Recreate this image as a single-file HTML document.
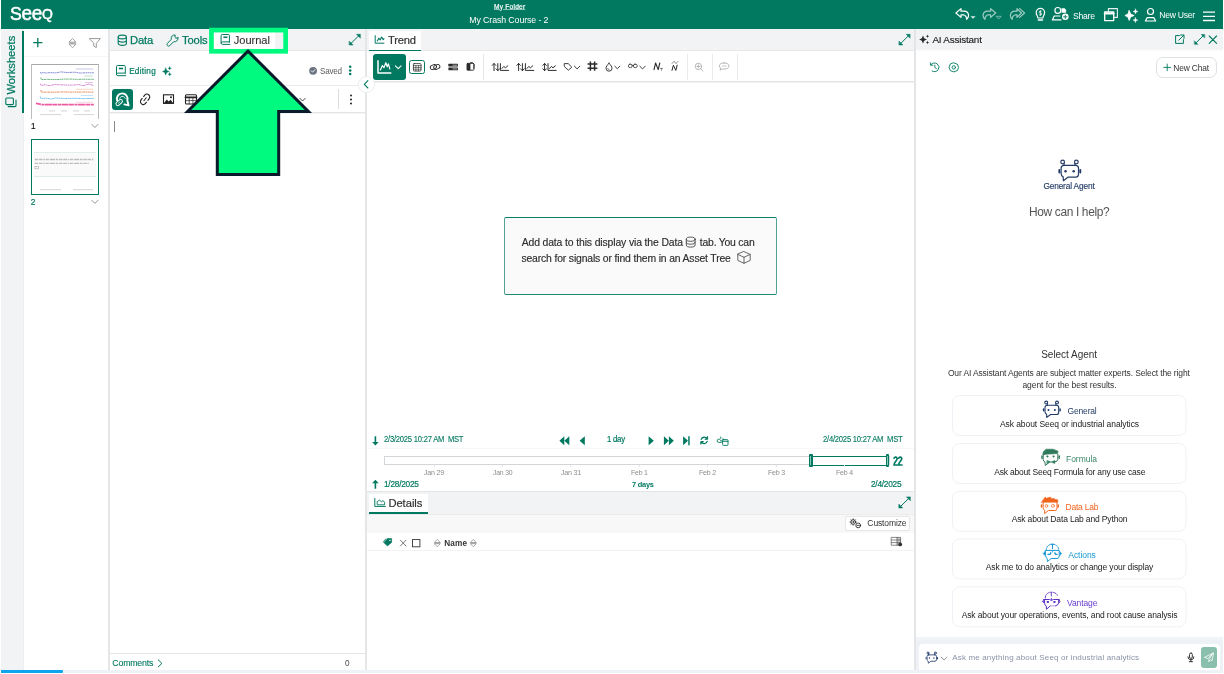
<!DOCTYPE html>
<html lang="en">
<head>
<meta charset="utf-8">
<title>Seeq - My Crash Course - 2</title>
<style>
*{box-sizing:border-box;margin:0;padding:0}
html,body{width:1224px;height:674px;overflow:hidden;background:#fff}
#app{position:absolute;left:0;top:0;width:1224px;height:674px;will-change:transform}
body{font-family:"Liberation Sans",sans-serif;font-size:11px;color:#333;position:relative}
.a{position:absolute}
.t{position:absolute;white-space:nowrap;line-height:1;transform-origin:0 50%;color:#333}
svg{position:absolute;overflow:visible}
.bar{background:#f1f3f4}
.sep{background:#e4e6e8}
.vs{width:1px;height:26px;top:54px;background:#e6e6e6}
.card{position:absolute;left:952px;width:234.5px;height:40.8px;border:1px solid #f1f4f7;border-radius:7px;background:#fff}
.i{fill:none;stroke:currentColor;stroke-linecap:round;stroke-linejoin:round}
</style>
</head>
<body>
<div id="app">
<!-- ===== top header ===== -->
<div class="a" style="left:1px;top:0;width:1222px;height:29px;background:#007960"></div>
<div class="t" style="left:10.4px;top:3.2px;font-size:19px;line-height:20px;color:#fff;-webkit-text-stroke:.55px #fff;letter-spacing:-.35px;transform:scaleX(.93)">S<span style="font-size:20.4px">ee</span><span style="font-size:21px;font-variant:small-caps;position:relative;top:-.9px;letter-spacing:0">q</span></div>
<div class="t" style="left:494.059px;top:3.81px;font-size:6.6px;letter-spacing:0.217px;color:#fff;text-decoration:underline;text-decoration-color:rgba(255,255,255,.55);text-underline-offset:.4px;-webkit-text-stroke:.2px">My Folder</div>
<div class="t" style="left:469.278px;top:15.913px;font-size:8.8px;letter-spacing:-0.11px;color:#fff">My Crash Course - 2</div>
<div class="t" style="left:1073.408px;top:12.004px;font-size:8.8px;letter-spacing:-0.264px;transform:scaleX(0.98);color:#fff">Share</div>
<div class="t" style="left:1159.296px;top:10.804px;font-size:8.6px;letter-spacing:-0.258px;color:#fff">New User</div>
<svg class="i" style="left:0;top:0;color:#fff" width="1224" height="29" stroke-width="1.2">
  <!-- undo -->
  <path d="M961 8.6 L955.9 13 L961 17.4 V14.8 H963.4 A4.6 4.6 0 0 1 966.6 19.3 A5.6 5.6 0 0 0 968.6 15.4 A4.6 4.6 0 0 0 964 11.2 H961 Z"/>
  <path d="M970.4 16.3 h5.2 l-2.6 2.5 z" fill="#fff" stroke="none" opacity=".85"/>
  <!-- redo (disabled) -->
  <g opacity=".62"><path d="M990.6 8.6 L995.7 13 L990.6 17.4 V14.8 H988.2 A4.6 4.6 0 0 0 985 19.3 A5.6 5.6 0 0 1 983 15.4 A4.6 4.6 0 0 1 987.6 11.2 H990.6 Z"/>
  <path d="M996.6 16.3 h4.6 l-2.3 2.5 z" stroke-width=".7"/></g>
  <!-- redo all (disabled) -->
  <g opacity=".62"><path d="M1017 8.6 L1021.4 13 L1017 17.4 V14.8 H1015.4 A4.6 4.6 0 0 0 1012.2 19.3 A5.6 5.6 0 0 1 1010.4 15.4 A4.6 4.6 0 0 1 1015 11.2 H1017 Z"/>
  <path d="M1019.6 8.6 L1024.6 13 L1019.6 17.4"/></g>
  <!-- light bulb -->
  <path d="M1037.9 18 C1037.9 16.2 1036.2 15.2 1036.2 12.6 A4.2 4.2 0 0 1 1044.6 12.6 C1044.6 15.2 1042.9 16.2 1042.9 18 Z"/>
  <path d="M1038.3 20.1 h4.2" stroke-width="1.5"/>
  <path d="M1041.3 11.3 h-1.3 a.9 .9 0 0 0 0 1.8 h.8 a.9 .9 0 0 1 0 1.8 h-1.4 M1040.4 10.5 v5.2" stroke-width=".7"/>
  <!-- share user -->
  <circle cx="1057.8" cy="10.4" r="2.9"/>
  <path d="M1061 19.9 H1052.4 L1054.2 16 H1060"/>
  <path d="M1062 8.6 h2.6 l1.2 1.2 v2.6 h-3.8 z" fill="#fff" stroke-width=".6"/>
  <circle cx="1065.3" cy="16.8" r="3.3" fill="#fff" stroke="none"/>
  <path d="M1063.6 16.8 h3.4 M1065.3 15.1 v3.4" stroke="#007960" stroke-width=".9"/>
  <!-- copy windows -->
  <path d="M1108.4 11.2 V8.6 H1117.4 V17.4 H1114.6" stroke-width="1.1" opacity=".9"/>
  <rect x="1104.7" y="12" width="9" height="8.6" stroke-width="1.3"/>
  <path d="M1104.7 13.4 h9" stroke-width="2"/>
  <!-- sparkles -->
  <path d="M1129.2 10.6 L1130.7 14.1 L1134.2 15.5 L1130.7 16.9 L1129.2 20.4 L1127.8 16.9 L1124.9 15.5 L1127.8 14.1 Z" fill="#fff" stroke-width=".8"/>
  <path d="M1135.5 9 L1136.2 10.8 L1138 11.5 L1136.2 12.2 L1135.5 14 L1134.8 12.2 L1133 11.5 L1134.8 10.8 Z" fill="#fff" stroke-width=".4"/>
  <path d="M1135.4 17.6 L1136.1 19.4 L1137.9 20.1 L1136.1 20.8 L1135.4 22.6 L1134.7 20.8 L1132.9 20.1 L1134.7 19.4 Z" fill="#fff" stroke-width=".4"/>
  <!-- user -->
  <circle cx="1150.5" cy="11.5" r="3"/>
  <path d="M1147.2 17.6 H1153.8 L1155.6 21 H1145.4 Z"/>
  <!-- menu -->
  <path d="M1203 12.1 h12 M1203 16.3 h12 M1203 20.5 h12" stroke-width="1.3" stroke-linecap="butt"/>
</svg>
<!-- ===== worksheets rail + panel ===== -->
<div class="a bar" style="left:1px;top:29px;width:23px;height:641px;border-right:1px solid #eceef0"></div>
<div class="a" style="left:22px;top:31px;width:2px;height:81.5px;background:#007960"></div>
<div class="t" style="left:0;top:0;font-size:11.2px;color:#007960;-webkit-text-stroke:.25px;transform-origin:0 0;transform:translate(15.5px,94.6px) rotate(-90deg) translateY(-9.3px)">Worksheets</div>
<div class="a" style="left:24px;top:56px;width:84px;height:1px;background:#f6f6f6"></div>
<svg class="i" style="left:0;top:29px;color:#007960" width="110" height="190" viewBox="0 29 110 190" stroke-width="1.2">
  <!-- worksheets icon -->
  <path d="M16 100 V105.6 Q16 106.6 15 106.6 H8.2" stroke-width="1.1"/><rect x="5.8" y="98" width="7.6" height="6.6" rx="1" stroke-width="1.1"/>
  <!-- plus -->
  <path d="M33.2 42.7 h9.2 M37.8 38.1 v9.2" stroke-width="1.3" stroke-linecap="butt"/>
  <!-- sort -->
  <g stroke="#9a9a9a" stroke-width=".9"><path d="M69.2 41.9 L72.5 38.5 L75.8 41.9 Z M69.2 44.3 L72.5 47.7 L75.8 44.3 Z"/><path d="M69.6 43.1 h5.8" stroke-width="1"/></g>
  <!-- filter -->
  <path d="M89.6 38.6 H100.4 L96.3 43.4 V47.6 L93.7 46 V43.4 Z" stroke="#9a9a9a" stroke-width="1"/>
  <!-- chevrons -->
  <path d="M91.8 124.4 L94.9 127.5 L98 124.4 M91.8 200.3 L94.9 203.4 L98 200.3" stroke="#8a8a8a" stroke-width=".9"/>
</svg>
<!-- thumbnail 1 -->
<div class="a" style="left:31px;top:64px;width:68px;height:55px;border:1px solid #bdbdbd;border-bottom:0;border-top-color:#a9a9a9;background:#fff"></div>
<svg style="left:31px;top:64px" width="68" height="55" viewBox="31 64 68 55" fill="none">
  <g stroke-width=".9" stroke-dasharray="2.2 .5 1.3 .4">
    <path d="M40.4 72 l.6 1.400 l2 -.9 l3 .5 l4 -.4 l6 .3 l5 -1 l6 .6 l8 -.3 l5 .9 l4 -.3 l9.800 0" stroke="#5a63c4" opacity=".8"/>
    <path d="M40.8 77.600 l.6 2 l5 -.2 l7 .1 h6 l4 -.4 h8 l6 .3 l8 -.2 l8.400 .1" stroke="#3f9c5c" opacity=".85"/>
    <path d="M40.4 83.600 l.6 1.800 l4 -.6 l5 .8 l5 -1.100 l8 .4 l7 .3 l9 -.6 l4 1.100 l6 -1.700 l4.600 1.600" stroke="#c458c8" opacity=".8"/>
    <path d="M40.800 90 l.6 2.200 l5 -.1 l8 .1 l7 -.3 l9 .2 l8 -.1 l15 .1" stroke="#e0753a" opacity=".9"/>
    <path d="M40.400 96.600 l.6 2 l5 -.4 l6 .9 l3 -1.100 l9 .5 l10 -.2 l9 .3 l10.600 -.2" stroke="#4aaeea" opacity=".85"/>
  </g>
  <path d="M36 103.400 l4 .8 l2 .500 h51.800" stroke="#ea3f90" stroke-width="1.700" stroke-dasharray="5 .6 3 .5 7 .4" opacity=".85"/>
  <g fill="#9aa0c8" opacity=".55"><rect x="76" y="68.600" width="17" height=".8" fill="#7a82c8"/><rect x="84" y="75.600" width="9" height=".8" fill="#7ab88a"/><rect x="85" y="82" width="8" height=".8" fill="#c880c8"/><rect x="76" y="88.800" width="17" height=".8" fill="#e8a078"/><rect x="81" y="95.200" width="12" height=".8" fill="#80c0ea"/><rect x="76" y="101.800" width="17" height=".7" fill="#ea90b8"/></g>
  <g fill="#d2d2d2"><rect x="49" y="110.400" width="6" height="1"/><rect x="61" y="110.400" width="6" height="1"/><rect x="73" y="110.400" width="6" height="1"/><rect x="84" y="110.400" width="6" height="1"/><rect x="40" y="114.200" width="21" height=".9"/><rect x="74" y="114.200" width="20" height=".9"/></g>
</svg>
<div class="t" style="left:30.879px;top:121.802px;font-size:8.4px;transform:scaleX(0.97);color:#111;-webkit-text-stroke:.2px">1</div>
<!-- thumbnail 2 (active) -->
<div class="a" style="left:31px;top:139px;width:68px;height:56px;border:1px solid #007960;border-bottom-width:1.5px;background:#fff"></div>
<div class="a" style="left:34.4px;top:152px;width:61.4px;height:24.6px;background:#fafafa;border-top:1px solid #dfeeea;border-bottom:1px solid #dfeeea"></div>
<svg style="left:31px;top:139px" width="68" height="56" viewBox="31 139 68 56" fill="#b9b9b9">
  <path d="M34.800 159.500 h59 M34.800 163.400 h54" fill="none" stroke="#a9a9a9" stroke-width="1.300" stroke-dasharray="3.4 .8 3.6 .8 1.6 .8 3 .8 5.4 .8 2.4 .8" opacity=".75"/><rect x="35" y="166.600" width="3.600" height="2.200" fill="none" stroke="#aaa" stroke-width=".6"/>
  <rect x="40" y="189.300" width="21" height=".9" fill="#cfcfcf"/><rect x="73" y="189.300" width="20" height=".9" fill="#cfcfcf"/>
</svg>
<div class="t" style="left:30.779px;top:197.802px;font-size:8.4px;color:#007960;-webkit-text-stroke:.2px">2</div>
<!-- ===== journal panel ===== -->
<div class="a sep" style="left:108px;top:29px;width:2px;height:641px"></div>
<div class="a bar" style="left:110px;top:29px;width:255px;height:21px"></div>
<div class="a" style="left:110px;top:50px;width:255px;height:1px;background:#e6e8ea"></div>
<div class="a" style="left:213px;top:31px;width:62px;height:19px;background:#fff"></div>
<div class="t" style="left:130.081px;top:35.2px;font-size:11.2px;letter-spacing:-0.171px;color:#007960;-webkit-text-stroke:.25px">Data</div>
<div class="t" style="left:181.948px;top:35.2px;font-size:11.2px;letter-spacing:-0.115px;color:#007960;-webkit-text-stroke:.25px">Tools</div>
<div class="t" style="left:233.827px;top:35.01px;font-size:11.1px;letter-spacing:-0.045px;-webkit-text-stroke:.12px">Journal</div>
<div class="t" style="left:129.127px;top:68.012px;font-size:8.2px;letter-spacing:0.261px;color:#007960;-webkit-text-stroke:.2px">Editing</div>
<div class="t" style="left:320.429px;top:67.211px;font-size:8.4px;letter-spacing:-0.252px;transform:scaleX(0.972);color:#5c5c5c">Saved</div>
<div class="a" style="left:110px;top:85px;width:255px;height:1px;background:#e9ebec"></div>
<div class="a" style="left:112px;top:89px;width:20.5px;height:20.5px;border-radius:3px;background:#007960"></div>
<div class="a" style="left:338px;top:89px;width:1px;height:20px;background:#dcdcdc"></div>
<div class="a" style="left:110px;top:112px;width:255px;height:1px;background:#e2e4e6"></div>
<div class="a" style="left:110px;top:113px;width:255px;height:1px;background:#f3f4f5"></div>
<div class="a" style="left:114.2px;top:121px;width:1.2px;height:11.4px;background:#8a8a8a"></div>
<div class="a" style="left:110px;top:653px;width:255px;height:1px;background:#e4e6e7"></div>
<div class="t" style="left:112.353px;top:658.807px;font-size:8.8px;letter-spacing:-0.223px;color:#007960;-webkit-text-stroke:.1px">Comments</div>
<div class="t" style="left:344.881px;top:658.911px;font-size:8.6px;transform:scaleX(0.949);color:#4a4a4a">0</div>
<svg class="i" style="left:110px;top:29px;color:#007960" width="258" height="641" viewBox="110 29 258 641" stroke-width="1.1">
  <!-- data (db) -->
  <ellipse cx="122.3" cy="37" rx="4.1" ry="1.9"/><path d="M118.200 37 V43.500 A4.100 1.900 0 0 0 126.400 43.500 V37 M118.200 40.200 A4.100 1.900 0 0 0 126.400 40.200"/>
  <!-- tools (wrench) -->
  <path d="M177.950 37.800 L175.800 38.200 L174.900 37.300 L175.200 35.050 A3.400 3.400 0 0 0 171.300 39.300 L167.300 43.500 A1.650 1.650 0 0 0 169.600 45.800 L173.700 41.700 A3.400 3.400 0 0 0 177.950 37.800 Z" stroke-width="1"/>
  <!-- journal (book) -->
  <path d="M229.400 42.200 V35.600 Q229.400 34.500 228.300 34.500 H222.200 Q221.100 34.500 221.100 35.600 V43 Q221.100 44.400 222.500 44.400 H229.800 M221.100 43 Q221.100 41.900 222.500 41.900 H229.400" stroke-width="1"/><path d="M223.400 37.200 h4" stroke-width="1.500" stroke-linecap="butt"/>
  <!-- expand -->
  <g stroke="#007960" fill="#007960" stroke-width="1"><path d="M351 43.4 L358.6 35.9"/><path d="M360.2 34.3 H356.5 L360.2 38 Z M349.4 45 H353.1 L349.4 41.3 Z" stroke-width=".5"/></g>
  <!-- editing (book) -->
  <path d="M125.300 73.200 V66.600 Q125.300 65.500 124.200 65.500 H117.600 Q116.500 65.500 116.500 66.600 V74.400 Q116.500 75.700 117.900 75.700 H125.700 M116.500 74.400 Q116.500 73.100 117.900 73.100 H125.300" stroke-width="1"/><path d="M118.900 68.500 h4.200" stroke-width="1.600" stroke-linecap="butt"/>
  <!-- sparkles -->
  <g fill="#007960" stroke-width=".3"><path d="M165.700 67.800 L166.800 70.400 L169.400 71.500 L166.800 72.600 L165.700 75.200 L164.600 72.600 L162.400 71.500 L164.600 70.400 Z"/><path d="M169.700 66.600 L170.200 67.800 L171.400 68.300 L170.200 68.800 L169.700 70 L169.200 68.800 L168 68.300 L169.200 67.800 Z M169.700 72.600 L170.200 73.800 L171.400 74.300 L170.200 74.800 L169.700 76 L169.200 74.800 L168 74.300 L169.200 73.800 Z"/></g>
  <!-- saved check -->
  <circle cx="313.100" cy="70.800" r="3.900" fill="#6b7280" stroke="none"/><path d="M311.300 70.900 L312.600 72.200 L315 69.600" stroke="#fff" stroke-width=".9"/>
  <!-- kebab -->
  <g fill="#007960" stroke="none"><circle cx="350.200" cy="66.800" r="1.250"/><circle cx="350.200" cy="70.400" r="1.250"/><circle cx="350.200" cy="74" r="1.250"/></g>
  <g fill="#222" stroke="none"><circle cx="351" cy="95.400" r="1"/><circle cx="351" cy="99.400" r="1"/><circle cx="351" cy="103.400" r="1"/></g>
  <!-- seeq link button glyph -->
  <g stroke="#fff"><path d="M117.200 100.400 A5.300 5.300 0 1 1 127.300 100.200 L128.600 105.400 L124.400 104.400" stroke-width="1.900"/><path d="M119.700 98.200 A3 3 0 0 1 125.300 98.600" stroke-width=".8" stroke-dasharray=".7 .5"/><rect x="-3.700" y="-1.800" width="7.400" height="3.600" rx="1.800" transform="translate(119.200 102.500) rotate(-42)" fill="#007960" stroke-width="1"/><path d="M118.300 103.300 L120.100 101.700" stroke-width=".7"/></g>
  <!-- link -->
  <g stroke="#222" stroke-width="1.100" transform="translate(145.100 99.300) rotate(-52)"><rect x="-5.800" y="-2.800" width="11.600" height="5.600" rx="2.800" stroke-dasharray="2.200 1.600 13.200 1.600 11" stroke-linecap="butt"/><path d="M-1.900 0 H1.900" stroke-width="1"/></g>
  <!-- image -->
  <rect x="163.500" y="94.800" width="10" height="8.600" stroke="#222" stroke-width="1.100" stroke-linejoin="miter"/><path d="M164 103 L166.800 99.600 L168.600 101.400 L170.600 99.800 L173 103 Z" fill="#222" stroke="none"/><circle cx="171" cy="97.300" r="1" fill="#222" stroke="none"/>
  <!-- table -->
  <g stroke="#222"><rect x="185.500" y="94.800" width="11" height="9.200" rx="1" stroke-width="1.100"/><path d="M185.500 97.400 h11" stroke-width="1.600"/><path d="M185.500 100.600 h11 M189.200 97.400 v6.600 M192.900 97.400 v6.600" stroke-width=".7"/></g>
  <!-- chevrons -->
  <path d="M299.800 98.300 L302.500 101 L305.200 98.300" stroke="#333" stroke-width=".9"/>
  <path d="M158.200 659.800 L161.900 663.400 L158.200 667" stroke-width="1"/>
</svg>
<!-- ===== trend panel ===== -->
<div class="a sep" style="left:365px;top:29px;width:2px;height:641px"></div>
<div class="a bar" style="left:367px;top:29px;width:547px;height:21px"></div>
<div class="a" style="left:367px;top:50px;width:547px;height:1px;background:#e6e8ea"></div>
<div class="a" style="left:369px;top:31px;width:52px;height:19.5px;background:#fff;border-bottom:1.5px solid #007960"></div>
<div class="t" style="left:387.948px;top:35.11px;font-size:11.2px;letter-spacing:-0.209px;-webkit-text-stroke:.2px">Trend</div>
<div class="a" style="left:373.3px;top:54px;width:32.700px;height:25.600px;border-radius:3px;background:#007960"></div>
<div class="a" style="left:409px;top:60px;width:16px;height:14px;border-radius:2.500px;border:1px solid #007960"></div>
<div class="a vs" style="left:483px"></div><div class="a vs" style="left:687px;opacity:.8"></div><div class="a vs" style="left:712px;opacity:.8"></div><div class="a vs" style="left:737px;opacity:.8"></div>
<div class="a" style="left:367px;top:81px;width:547px;height:1px;background:#e2e4e6"></div>
<div class="a" style="left:367px;top:82px;width:547px;height:1px;background:#f0f1f2"></div>
<!-- collapse handle -->
<div class="a" style="left:358px;top:76px;width:16.500px;height:16.500px;border-radius:50%;background:#fff;border:1px solid #ececec"></div>
<!-- empty state -->
<div class="a" style="left:504px;top:217px;width:273px;height:78px;border:1px solid #4fa391;border-top-color:#0a7e66;border-bottom-color:#1f8b74;border-radius:2px;background:#fafafa"></div>
<div class="t" style="left:521.68px;top:238.206px;font-size:10.4px;letter-spacing:-0.124px;color:#2c2c2c;-webkit-text-stroke:.15px">Add data to this display via the Data</div>
<div class="t" style="left:699.843px;top:238.206px;font-size:10.4px;letter-spacing:-0.214px;color:#2c2c2c;-webkit-text-stroke:.15px">tab. You can</div>
<div class="t" style="left:521.411px;top:253.706px;font-size:10.4px;letter-spacing:-0.151px;color:#2c2c2c;-webkit-text-stroke:.15px">search for signals or find them in an Asset Tree</div>
<!-- time range -->
<div class="t" style="left:383.916px;top:435.411px;font-size:8.6px;letter-spacing:-0.258px;transform:scaleX(0.887);color:#007960;-webkit-text-stroke:.12px">2/3/2025 10:27 AM &nbsp;MST</div>
<div class="t" style="left:607.107px;top:435.308px;font-size:8.3px;letter-spacing:-0.249px;transform:scaleX(0.938);color:#007960;-webkit-text-stroke:.2px">1 day</div>
<div class="t" style="left:823.315px;top:435.411px;font-size:8.6px;letter-spacing:-0.258px;transform:scaleX(0.889);color:#007960;-webkit-text-stroke:.12px">2/4/2025 10:27 AM &nbsp;MST</div>
<div class="a" style="left:367px;top:448px;width:547px;height:1px;background:#f7f7f7"></div>
<div class="a" style="left:384px;top:456px;width:506px;height:9px;border:1px solid #d3d6d9;background:#fff"></div>
<div class="a" style="left:811px;top:455.500px;width:76px;height:10px;border-top:1.300px solid #007960;border-bottom:1.300px solid #007960;background:#fff"></div>
<div class="a" style="left:809px;top:454px;width:3.600px;height:12.500px;background:#007960;border-radius:1px"></div><div class="a" style="left:810.400px;top:456px;width:.8px;height:8.500px;background:#8cc7b8"></div>
<div class="a" style="left:885.600px;top:454px;width:3.600px;height:12.500px;background:#007960;border-radius:1px"></div><div class="a" style="left:887px;top:456px;width:.8px;height:8.500px;background:#8cc7b8"></div>
<div class="a" style="left:433.5px;top:465px;width:1px;height:2px;background:#dfe6ee"></div><div class="a" style="left:501.9px;top:465px;width:1px;height:2px;background:#dfe6ee"></div><div class="a" style="left:570.4px;top:465px;width:1px;height:2px;background:#dfe6ee"></div><div class="a" style="left:638.8px;top:465px;width:1px;height:2px;background:#dfe6ee"></div><div class="a" style="left:707.3px;top:465px;width:1px;height:2px;background:#dfe6ee"></div><div class="a" style="left:775.7px;top:465px;width:1px;height:2px;background:#dfe6ee"></div><div class="a" style="left:844.2px;top:465px;width:1px;height:2px;background:#dfe6ee"></div>
<div class="t" style="left:424.19px;top:469.002px;font-size:7.4px;letter-spacing:-0.222px;transform:scaleX(0.956);color:#8c8c8c">Jan 29</div>
<div class="t" style="left:492.892px;top:469.002px;font-size:7.4px;letter-spacing:-0.222px;transform:scaleX(0.933);color:#8c8c8c">Jan 30</div>
<div class="t" style="left:561.189px;top:469.002px;font-size:7.4px;letter-spacing:-0.222px;transform:scaleX(0.956);color:#8c8c8c">Jan 31</div>
<div class="t" style="left:631.13px;top:469.002px;font-size:7.4px;letter-spacing:-0.222px;transform:scaleX(0.939);color:#8c8c8c">Feb 1</div>
<div class="t" style="left:699.419px;top:469.002px;font-size:7.4px;letter-spacing:-0.222px;transform:scaleX(0.957);color:#8c8c8c">Feb 2</div>
<div class="t" style="left:768.121px;top:469.002px;font-size:7.4px;letter-spacing:-0.222px;transform:scaleX(0.954);color:#8c8c8c">Feb 3</div>
<div class="t" style="left:836.424px;top:469.002px;font-size:7.4px;letter-spacing:-0.222px;transform:scaleX(0.948);color:#8c8c8c">Feb 4</div>
<div class="t" style="left:383.667px;top:480.408px;font-size:8.4px;letter-spacing:-0.252px;transform:scaleX(0.99);color:#007960;-webkit-text-stroke:.2px">1/28/2025</div>
<div class="t" style="left:631.882px;top:481.303px;font-size:7.9px;letter-spacing:-0.237px;transform:scaleX(0.938);color:#007960;font-weight:bold">7 days</div>
<div class="t" style="left:871.281px;top:480.408px;font-size:8.4px;letter-spacing:-0.252px;transform:scaleX(0.991);color:#007960;-webkit-text-stroke:.2px">2/4/2025</div>
<!-- ===== details panel ===== -->
<div class="a" style="left:367px;top:491px;width:547px;height:1px;background:#e3e5e7"></div>
<div class="a bar" style="left:367px;top:492px;width:547px;height:21.500px"></div>
<div class="a" style="left:369px;top:494px;width:59px;height:20px;background:#fff;border-bottom:2px solid #007960"></div>
<div class="t" style="left:388.381px;top:498.004px;font-size:11.2px;letter-spacing:-0.029px;-webkit-text-stroke:.2px">Details</div>
<div class="a" style="left:367px;top:514px;width:547px;height:18.700px;background:#f8f8f8;border-top:1px solid #ebebeb"></div>
<div class="a" style="left:845px;top:516px;width:65px;height:14.500px;background:#fff;border:1px solid #e6e6e6;border-radius:2px"></div>
<div class="t" style="left:867.368px;top:519.311px;font-size:8.5px;letter-spacing:-0.118px">Customize</div>
<div class="t" style="left:444.251px;top:540.209px;font-size:8.2px;letter-spacing:0.176px;font-weight:bold">Name</div>
<div class="a" style="left:367px;top:550px;width:547px;height:1px;background:#f3f3f3"></div>
<svg class="i" style="left:365px;top:29px;color:#2b2b2b" width="550" height="530" viewBox="365 29 550 530" stroke-width="1">
  <!-- trend tab icon -->
  <g stroke="#007960"><path d="M375.200 35.600 V43.200 H384"/><path d="M377.300 41 L378.800 38.200 L380.200 40 L381.600 37 L383.200 39.600 L384 38.600" stroke-width="1.100"/></g>
  <!-- expand (trend) -->
  <g stroke="#007960" fill="#007960" stroke-width="1"><path d="M900.8 43.4 L908.3 35.9"/><path d="M909.9 34.3 H906.2 L909.9 38 Z M899.2 45 H902.9 L899.2 41.3 Z" stroke-width=".5"/></g>
  <!-- collapse chevron -->
  <path d="M367.900 80.600 L364.300 84.300 L367.900 88" stroke="#007960" stroke-width="1.100"/>
  <!-- chart button -->
  <g stroke="#fff"><path d="M378 60.800 V73 H390.800" stroke-width="1.500"/><path d="M380.400 70 L382.400 65.600 L384 67.600 L385.800 62.600 L387.200 66.800 L388.400 63.800 L389.800 68.800" stroke-width="1.200"/><path d="M395.400 65.800 L398.200 68.600 L401 65.800" stroke-width="1.100"/></g>
  <!-- calendar -->
  <g stroke-width=".8"><rect x="413.400" y="63.600" width="7.600" height="7.400" rx=".8"/><path d="M413.400 65.600 h7.600 M415.900 65.600 v5.400 M418.400 65.600 v5.400 M413.400 67.400 h7.600 M413.400 69.200 h7.600" stroke-width=".6"/></g>
  <!-- link -->
  <g stroke-width=".9"><rect x="430.200" y="65" width="6.400" height="4" rx="2" transform="rotate(-25 433.400 67)"/><rect x="433.600" y="65" width="6.400" height="4" rx="2" transform="rotate(-25 436.800 67)"/></g>
  <!-- rows -->
  <g fill="#2b2b2b" stroke="none"><rect x="448.400" y="63.800" width="9.600" height="2.800" rx=".5"/><rect x="448.400" y="67.500" width="9.600" height="2.800" rx=".5"/></g><path d="M453 65.200 h4 M453 68.900 h4" stroke="#fff" stroke-width=".6"/>
  <!-- contrast -->
  <rect x="467" y="63.400" width="6.800" height="6.800" rx=".6" stroke-width=".9"/><path d="M467 63.400 h3.400 v6.800 h-3.400 z" fill="#2b2b2b" stroke="none"/><path d="M470.400 62.600 h2.200 l1.600 1.600 v4" stroke-width=".8"/>
  <!-- axis group icons -->
  <g stroke-width=".95" stroke="#222">
    <path d="M494 70.600 V63.600 M492.200 65.400 L494 63.500 L495.800 65.400 M497.800 63.600 V70.600 M496 68.800 L497.800 70.700 L499.600 68.800 M500.400 63.600 V70.400 H508.600 M502 68.400 L503.800 66.400 L505.400 67.800 L507.800 65.800"/>
    <path d="M518.600 70.600 V63.600 M516.800 65.400 L518.600 63.500 L520.400 65.400 M522.400 63.600 V70.600 M520.600 68.800 L522.400 70.700 L524.200 68.800 M525.400 63.600 V70.400 H533.800 M527 68.400 L528.800 66.400 L530.400 67.800 L532.800 65.800"/>
    <path d="M544.600 63.600 V70.600 M542.800 65.400 L544.600 63.500 L546.400 65.400 M542.800 68.800 L544.600 70.700 L546.400 68.800 M548 63.600 V70.400 H556.200 M549.600 68.400 L551.400 66.400 L553 67.800 L555.400 65.800"/>
  </g>
  <!-- tag -->
  <path d="M564.600 63.600 H568.200 L571.800 67.200 L568.400 70.200 L564.600 66.800 Z" stroke-width=".9"/><path d="M574.400 66.200 L577.100 68.900 L579.800 66.200" stroke-width=".9"/>
  <!-- grid -->
  <path d="M587.600 64 h9.800 M587.600 68.200 h9.800 M590.400 61.400 v9.400 M594.600 61.400 v9.400" stroke-width="1.500" stroke-linecap="butt"/>
  <!-- drop -->
  <path d="M609 63.200 C610.800 65.400 612 66.600 612 68.200 A3 3 0 0 1 606 68.200 C606 66.600 607.200 65.400 609 63.200 Z" stroke-width=".9"/><path d="M607.600 68.400 A1.500 1.500 0 0 0 609 69.600" stroke-width=".6"/><path d="M614.800 66.200 L617.300 68.700 L619.800 66.200" stroke-width=".9"/>
  <!-- glasses -->
  <g stroke-width=".8"><rect x="628.400" y="64.200" width="3.800" height="3.400" rx="1.600"/><rect x="633.400" y="64.200" width="3.800" height="3.400" rx="1.600"/><path d="M632.200 65.400 h1.200"/></g><path d="M639.800 66.200 L642.500 68.900 L645.200 66.200" stroke-width=".9"/>
  <!-- N -->
  <path d="M654 69.600 L655.600 63 L658.200 69.600 L659.800 63" stroke-width="1.100"/><path d="M660.200 68.400 h2.400 M661.400 68.400 v2" stroke-width=".5"/>
  <!-- dashed N -->
  <path d="M672 70.400 L673.400 65.200 L675.800 70.400 L677.200 65.200" stroke-width="1"/><path d="M672 63.600 L674 61.200 L676 63.600 L678 61.200" stroke-width=".5" stroke-dasharray=".9 .7"/>
  <!-- zoom (disabled) -->
  <g stroke="#a6a6a6" stroke-width=".8"><circle cx="698.400" cy="66.400" r="3.200"/><path d="M700.800 68.800 L703 71 M696.900 66.400 h3 M698.400 64.900 v3"/></g>
  <!-- comment (disabled) -->
  <g stroke="#a6a6a6" stroke-width=".8"><path d="M724.200 62.900 C727 62.900 729 64.200 729 66 C729 67.800 727 69.100 724.200 69.100 C723.600 69.100 723 69 722.500 68.900 L720 70 L720.700 68.100 C719.900 67.500 719.400 66.800 719.400 66 C719.400 64.200 721.400 62.900 724.200 62.900 Z"/><path d="M722.300 66 h3.800" stroke-dasharray=".6 1" stroke-width=".7"/></g>
  <!-- data icon in empty state -->
  <g stroke="#444" stroke-width=".9"><ellipse cx="690.700" cy="239.200" rx="4.400" ry="2.100"/><path d="M686.300 239.200 V245 A4.400 2.100 0 0 0 695.100 245 V239.200 M686.300 242.100 A4.400 2.100 0 0 0 695.100 242.100"/></g>
  <!-- cube -->
  <g stroke="#555" stroke-width=".9"><path d="M744 251.600 L750.200 254.400 V260.400 L744 263.300 L737.800 260.400 V254.400 Z M737.800 254.400 L744 257.300 L750.200 254.400 M744 257.300 V263.300"/></g>
  <!-- time arrows -->
  <g fill="#007960" stroke="none">
    <path d="M374.600 436.300 h1.600 v5.700 h2.500 l-3.300 3.500 l-3.300 -3.500 h2.500 z"/>
    <path d="M374.600 488.800 h1.600 v-5.600 h2.500 l-3.300 -3.500 l-3.300 3.500 h2.500 z"/>
    <path d="M564.300 436.200 V445.200 L559.400 440.700 Z M569.300 436.200 V445.200 L564.400 440.700 Z"/>
    <path d="M584.800 436.200 V445.200 L579.600 440.700 Z"/>
    <path d="M648.600 436.200 V445.200 L653.800 440.700 Z"/>
    <path d="M663.900 436.200 V445.200 L668.800 440.700 Z M668.900 436.200 V445.200 L673.800 440.700 Z"/>
    <path d="M683.100 436.200 V445.200 L688 440.700 Z M688.200 436.200 h1.500 v9 h-1.500 z"/>
  </g>
  <!-- refresh -->
  <g stroke="#007960" stroke-width="1.300"><path d="M701.200 439.400 A3.300 3.300 0 0 1 707 438.600 M707.200 441.400 A3.300 3.300 0 0 1 701.400 442.200"/><path d="M707.600 436.600 V439.200 H705 M700.800 444.200 V441.600 H703.400" stroke-width="1" fill="#007960"/></g>
  <!-- copy range -->
  <g stroke="#007960" stroke-width=".9"><path d="M721.400 442.400 H718.800 A1.600 1.600 0 0 1 718.800 439.200 H720 M722.400 439.200 H723.600 M720.400 440.800 h2.600 M720.800 437 v1.400"/><rect x="722.600" y="439.600" width="5.400" height="5.800" rx=".8" fill="#fff"/><path d="M722.600 441.200 h5.400" stroke-width="1.100"/></g>
  <!-- range presets -->
  <g stroke="#007960" stroke-width="1.600" stroke-linejoin="miter"><path d="M894 458.200 A1.700 1.700 0 0 1 897.200 458.400 C897.200 460.600 894 462.200 894 465 H897.400 M898.600 458.200 A1.700 1.700 0 0 1 901.800 458.400 C901.800 460.600 898.600 462.200 898.600 465 H902"/></g>
  <!-- details tab icon -->
  <g stroke="#007960"><path d="M374.800 498.400 V506.400 H385.400"/><path d="M377.200 504.400 V501.600 L379.600 500.200 L381.400 501.800 L383.200 500.600 L384.600 502.400 V504.400 Z" stroke-width=".9"/></g>
  <!-- expand (details) -->
  <g stroke="#007960" fill="#007960" stroke-width="1"><path d="M900.6 506.4 L908.6 498.5"/><path d="M910.2 496.9 H906.5 L910.2 500.6 Z M899 508 H902.7 L899 504.3 Z" stroke-width=".5"/></g>
  <!-- customize gears -->
  <g stroke="#2b2b2b" stroke-width=".9"><circle cx="853.200" cy="522" r="2.300"/><circle cx="853.200" cy="522" r=".5"/><path d="M853.200 518.800 v.9 M853.200 524.300 v.9 M850 522 h.9 M855.500 522 h.9 M850.900 519.700 l.7 .7 M855.500 519.700 l-.7 .7 M850.900 524.300 l.7 -.7" stroke-width=".8"/><circle cx="858.200" cy="525.400" r="2.400" fill="#fff"/><path d="M857 525.400 h2.400" stroke-width=".8"/></g>
  <!-- tags -->
  <g stroke="#007960" fill="#007960" stroke-width=".6"><path d="M387.600 538.600 H391.600 V542.400 L387.400 546 L384 542.400 Z"/><path d="M385.800 539 L383.400 541.600 L385.200 543.600" fill="none" stroke-width=".8"/></g><circle cx="389.900" cy="540.400" r=".7" fill="#fff" stroke="none"/>
  <!-- remove x -->
  <path d="M400.400 540.200 L406 546 M406 540.200 L400.400 546" stroke="#555" stroke-width=".8"/>
  <!-- checkbox -->
  <rect x="412.500" y="539.600" width="7.400" height="7.200" stroke="#333" stroke-width=".9" stroke-linejoin="miter"/>
  <!-- sorts -->
  <g stroke="#8a8a8a" stroke-width=".7"><path d="M434.600 542.200 L437.300 539.400 L440 542.200 Z M434.600 544 L437.300 546.800 L440 544 Z M434.800 543.100 h5"/><path d="M470.600 542.200 L473.300 539.400 L476 542.200 Z M470.600 544 L473.300 546.800 L476 544 Z M470.800 543.100 h5"/></g>
  <!-- column chooser -->
  <g stroke="#555" stroke-width=".7"><rect x="897" y="537.400" width="3.600" height="7.800" fill="#c9c9c9" stroke="none"/><rect x="891.600" y="537.400" width="9" height="7.800"/><path d="M891.600 540 h9 M891.600 542.600 h9 M897 537.400 v7.800"/><circle cx="900.200" cy="544.400" r="1.900" fill="#333" stroke="none"/></g>
</svg>
<!-- ===== AI assistant panel ===== -->
<div class="a" style="left:914px;top:29px;width:2px;height:641px;background:#e3e5e7"></div>
<div class="a bar" style="left:916px;top:29px;width:307px;height:20px"></div><div class="a" style="left:916px;top:49px;width:307px;height:1px;background:#f4f5f6"></div><div class="a" style="left:916px;top:50px;width:307px;height:1px;background:#fbfbfc"></div>
<div class="t" style="left:932.381px;top:35.01px;font-size:9.9px;letter-spacing:-0.186px;color:#222;-webkit-text-stroke:.15px">AI Assistant</div>
<div class="a" style="left:1156px;top:57px;width:61px;height:20.700px;border:1px solid #dde1e5;border-radius:7px;background:#fff"></div>
<div class="t" style="left:1173.311px;top:63.605px;font-size:8.4px;letter-spacing:-0.146px">New Chat</div>
<div class="t" style="left:1043.383px;top:181.915px;font-size:8.3px;letter-spacing:-0.144px;color:#243c66;-webkit-text-stroke:.15px">General Agent</div>
<div class="t" style="left:1029.02px;top:206.003px;font-size:12.4px;letter-spacing:-0.372px;transform:scaleX(0.964);color:#555">How can I help?</div>
<div class="t" style="left:1041.246px;top:350.004px;font-size:10px;letter-spacing:-0.034px">Select Agent</div>
<div class="t" style="left:947.897px;top:368.811px;font-size:8.5px;letter-spacing:-0.133px">Our AI Assistant Agents are subject matter experts. Select the right</div>
<div class="t" style="left:1022.439px;top:381.311px;font-size:8.5px;letter-spacing:-0.068px">agent for the best results.</div>
<svg style="left:0;top:0" width="1224" height="674" fill="#fff" stroke="#eef1f5" stroke-width="1"><rect x="952.500" y="395.5" width="233.500" height="40" rx="7"/><rect x="952.500" y="443.5" width="233.500" height="40" rx="7"/><rect x="952.500" y="491.3" width="233.500" height="40" rx="7"/><rect x="952.500" y="539.0" width="233.500" height="40" rx="7"/><rect x="952.500" y="586.9" width="233.500" height="40" rx="7"/></svg>
<div class="t" style="left:1067.573px;top:407.205px;font-size:8.5px;letter-spacing:-0.174px;color:#243c66">General</div>
<div class="t" style="left:999.983px;top:419.705px;font-size:8.5px;letter-spacing:-0.071px;color:#222">Ask about Seeq or industrial analytics</div>
<div class="t" style="left:1066.003px;top:455.205px;font-size:8.5px;letter-spacing:-0.029px;color:#3a8767">Formula</div>
<div class="t" style="left:994.183px;top:467.705px;font-size:8.5px;letter-spacing:-0.186px;color:#222">Ask about Seeq Formula for any use case</div>
<div class="t" style="left:1065.503px;top:502.811px;font-size:8.5px;letter-spacing:-0.235px;color:#f0641e">Data Lab</div>
<div class="t" style="left:1011.683px;top:515.311px;font-size:8.5px;letter-spacing:-0.149px;color:#222">Ask about Data Lab and Python</div>
<div class="t" style="left:1068.283px;top:550.811px;font-size:8.5px;letter-spacing:-0.058px;color:#1b97d4">Actions</div>
<div class="t" style="left:985.783px;top:563.311px;font-size:8.5px;letter-spacing:-0.122px;color:#222">Ask me to do analytics or change your display</div>
<div class="t" style="left:1066.963px;top:598.705px;font-size:8.5px;letter-spacing:-0.104px;color:#6a3fcf">Vantage</div>
<div class="t" style="left:961.683px;top:611.205px;font-size:8.5px;letter-spacing:-0.118px;color:#222">Ask about your operations, events, and root cause analysis</div>
<div class="a" style="left:916px;top:637px;width:307px;height:33px;background:linear-gradient(#f3f5f8,#eef2f6 4px)"></div>
<div class="a" style="left:919px;top:644px;width:301px;height:26px;background:#fff;border-radius:4px 4px 0 0"></div>
<div class="t" style="left:952.284px;top:653.812px;font-size:8px;letter-spacing:0.155px;color:#8a93a8">Ask me anything about Seeq or industrial analytics</div>
<div class="a" style="left:1201.200px;top:647px;width:16px;height:20.800px;background:#8abfae;border-radius:3px"></div>
<svg class="i" style="left:916px;top:29px" width="308" height="645" viewBox="916 29 308 645" stroke-width="1">
  <!-- tab sparkles -->
  <g fill="#2b2b2b" stroke="none"><path d="M923 35.500 L924.200 38.300 L927 39.500 L924.200 40.700 L923 43.500 L921.800 40.700 L919.200 39.500 L921.800 38.300 Z"/><path d="M927.500 34.600 L928 35.800 L929.200 36.300 L928 36.800 L927.500 38 L927 36.800 L925.800 36.300 L927 35.800 Z M927.500 40.800 L928 42 L929.200 42.500 L928 43 L927.500 44.200 L927 43 L925.800 42.500 L927 42 Z"/></g>
  <!-- pop out, expand, close -->
  <g stroke="#007960"><path d="M1179.400 35.600 H1175.600 V43.400 H1183.400 V39.600 M1178.800 40.200 L1183.800 35.200 M1180.600 35 H1184 V38.400"/><g stroke="#007960" fill="#007960" stroke-width="1"><path d="M1196.2 42.7 L1202.9 36.1"/><path d="M1204.5 34.5 H1201.2 L1204.5 37.8 Z M1194.6 44.3 H1197.9 L1194.6 41 Z" stroke-width=".5"/></g><path d="M1209.200 36 L1216.600 43.400 M1216.600 36 L1209.200 43.400" stroke-width="1.100"/></g>
  <!-- history -->
  <g stroke="#007960" stroke-width=".9"><path d="M931 64.600 A4.400 4.400 0 1 1 932 71"/><path d="M930.400 62.800 V65.200 H932.800 M934.800 65.200 V67.500 L936.400 68.600"/></g>
  <!-- settings -->
  <g stroke="#007960" stroke-width=".9"><path d="M953.800 62.900 L957.300 64.200 L958.600 67.400 L957.300 70.600 L953.800 71.900 L950.300 70.600 L949 67.400 L950.300 64.200 Z"/><circle cx="953.800" cy="67.400" r="1.700"/></g>
  <!-- new chat plus -->
  <path d="M1163.400 67.400 h7.600 M1167.200 63.700 v7.400" stroke="#007960" stroke-width=".9" stroke-linecap="butt"/>
  <!-- agent avatars -->
  <g transform="translate(1070 170.400) scale(1.270)" style="color:#243c66" stroke="#243c66" stroke-width=".95"><path d="M-4.6 -3.95 H4.4 Q6.7 -3.95 6.7 -1.65 V2.95 Q6.7 5.25 4.4 5.25 H-1.4 L-5.2 8.1 L-5.4 5.1 Q-7 4.3 -7 2.5 V-1.65 Q-7 -3.95 -4.6 -3.95 Z"/><circle cx="-5.8" cy="-6.65" r="1.45"/><circle cx="5" cy="-6.65" r="1.45"/><path d="M-4.7 -5.6 V-3.95 M3.9 -5.6 V-3.95"/><path d="M-8.4 -.3 V1.6 M8.1 -.3 V1.6" stroke-width="1.5"/><circle cx="-3.5" cy=".65" r="1" fill="currentColor" stroke="none"/><circle cx="2.9" cy=".65" r="1" fill="currentColor" stroke="none"/></g>
  <g transform="translate(1052 409.250)" style="color:#1f3a68" stroke="#1f3a68" stroke-width="1.100"><path d="M-4.6 -3.95 H4.4 Q6.7 -3.95 6.7 -1.65 V2.95 Q6.7 5.25 4.4 5.25 H-1.4 L-5.2 8.1 L-5.4 5.1 Q-7 4.3 -7 2.5 V-1.65 Q-7 -3.95 -4.6 -3.95 Z"/><circle cx="-5.8" cy="-6.65" r="1.45"/><circle cx="5" cy="-6.65" r="1.45"/><path d="M-4.7 -5.6 V-3.95 M3.9 -5.6 V-3.95"/><path d="M-8.4 -.3 V1.6 M8.1 -.3 V1.6" stroke-width="1.5"/><circle cx="-3.5" cy=".65" r="1" fill="currentColor" stroke="none"/><circle cx="2.9" cy=".65" r="1" fill="currentColor" stroke="none"/></g>
  <g transform="translate(931.900 657.600) scale(.69)" style="color:#1f3a68" stroke="#1f3a68" stroke-width="1.200"><path d="M-4.6 -3.95 H4.4 Q6.7 -3.95 6.7 -1.65 V2.95 Q6.7 5.25 4.4 5.25 H-1.4 L-5.2 8.1 L-5.4 5.1 Q-7 4.3 -7 2.5 V-1.65 Q-7 -3.95 -4.6 -3.95 Z"/><circle cx="-5.8" cy="-6.65" r="1.45"/><circle cx="5" cy="-6.65" r="1.45"/><path d="M-4.7 -5.6 V-3.95 M3.9 -5.6 V-3.95"/><path d="M-8.4 -.3 V1.6 M8.1 -.3 V1.6" stroke-width="1.5"/><circle cx="-3.5" cy=".65" r="1" fill="currentColor" stroke="none"/><circle cx="2.9" cy=".65" r="1" fill="currentColor" stroke="none"/></g>
  <path d="M941.200 657.200 L944.100 660 L947 657.200" stroke="#777" stroke-width=".8"/>
  <!-- formula -->
  <g stroke="#2f7a5a" style="color:#2f7a5a"><path d="M1046.300 449.200 H1053.100 L1058.100 451.300 L1057.400 453.600 L1046 454.200 L1042.800 455 L1043.200 452 Z" fill="#2f7a5a" stroke-width=".6"/><path d="M1043.800 454.600 Q1043.200 455.600 1043.200 457 V459.400 Q1043.200 461.400 1045 462 L1045.300 465.500 L1048.400 463 M1054.400 462 Q1057.800 461.800 1057.800 459.400 V454"/><path d="M1042 456 V458.200 M1059.200 456 V458.200" stroke-width="1.500"/><path d="M1047.400 455.400 l1.100 1.100 l-1.100 1.100 l-1.100 -1.100 z M1053.600 455.400 l1.100 1.100 l-1.100 1.100 l-1.100 -1.100 z" fill="#2f7a5a" stroke-width=".3"/><path d="M1047.200 460.400 L1051 462 L1054.800 460.400 V463.600 L1051 462 L1047.200 463.600 Z" fill="#2f7a5a" stroke-width=".5"/></g>
  <!-- data lab -->
  <g stroke="#f0641e" style="color:#f0641e"><path d="M1041.600 502.200 L1043.400 499.400 L1045.300 497 L1046.300 498.300 L1050.600 497 L1051 498.800 L1054.200 498.400 L1054.900 499.600 L1057.700 499.800 V502.200 H1044 Z" fill="#f0641e" stroke-width=".6"/><path d="M1043.800 501.800 Q1043.100 502.600 1043.100 504 V507.600 Q1043.100 509.600 1044.800 510.200 L1044.600 513.600 L1048.400 510.500 H1054.800 Q1057 510.500 1057 508.300 V502"/><path d="M1041.500 505 V507 M1058.200 505 V507" stroke-width="1.500"/><ellipse cx="1046.400" cy="505.900" rx="1.200" ry="1.500" stroke-width=".7"/><circle cx="1052.900" cy="505.800" r="1.500" stroke-width=".7"/></g>
  <!-- actions -->
  <g stroke="#1b97d4" style="color:#1b97d4"><path d="M1046.300 550.200 C1046.300 546.400 1049 544.200 1052.400 544.200 C1055.800 544.200 1058.800 546.400 1058.800 550.200" stroke-width=".9" stroke-dasharray="1.600 1.100"/><path d="M1051 544.300 H1054 M1052.500 544.400 V548.600" stroke-width="1"/><path d="M1045.600 550.400 H1059.200 V556.200 Q1059.200 558.500 1057 558.500 H1051.200 L1047.400 561.600 L1047.200 558.400 Q1045.600 557.800 1045.600 556 Z"/><path d="M1045 551.600 L1043.200 553.600 L1045 555.600 M1059.800 551.600 L1061.600 553.600 L1059.800 555.600" fill="#1b97d4" stroke-width=".7"/><path d="M1052.400 550.600 V552" stroke-width=".9"/><path d="M1048 554.400 h2 l.8 -1.600 M1054.800 552.800 l.8 1.600 h1.400" stroke-width="1.400"/></g>
  <!-- vantage -->
  <g stroke="#5b2fc4" style="color:#5b2fc4"><path d="M1045.300 598 C1045.300 594.400 1048 592.200 1051.300 592.200 C1054.600 592.200 1056.800 593.800 1057.400 595.400" stroke-width=".9" stroke-dasharray="1.600 1.100"/><path d="M1051.300 592.600 V596 M1051.400 598.400 V600" stroke-width=".9"/><path d="M1043.600 599.500 H1049.400 L1051.400 600.400 L1053.400 599.500 H1059.200" stroke-width="1"/><path d="M1044.600 599.600 V603.400 Q1044.600 605.200 1046.200 605.800 L1046.500 609.200 L1050.200 606 M1055.600 605.800 Q1058.400 605.400 1058.600 602.800 V599.600"/><path d="M1050.600 605.900 H1055.400" stroke-width="1" opacity=".45"/><path d="M1043.800 600 L1042.400 601.400 L1043.800 602.800 M1059.200 600 L1060 601.400 L1059.200 602.800" fill="#5b2fc4" stroke-width=".8"/><rect x="1046.800" y="601" width="2.100" height="1.900" fill="#5b2fc4" stroke="none"/><rect x="1053.400" y="601" width="2.100" height="1.900" fill="#5b2fc4" stroke="none"/></g>
  <!-- mic -->
  <g stroke="#222" stroke-width=".9"><rect x="1189.500" y="653" width="2.800" height="5.400" rx="1.400"/><path d="M1187.900 656.800 A3 3 0 0 0 1193.900 656.800 M1190.900 659.800 V661.600 M1189.300 661.700 H1192.500"/></g>
  <!-- send -->
  <path d="M1213.200 653 L1204.400 657.400 L1207.800 658.600 L1213.200 653 L1208.800 659.400 V661.800 L1210.200 659.800 L1211.600 660.600 Z" stroke="#fff" stroke-width=".8" fill="none"/>
</svg>
<!-- ===== bottom progress bar ===== -->
<div class="a" style="left:1px;top:670px;width:1222px;height:3px;background:#eef2f6"></div>
<div class="a" style="left:1px;top:670px;width:62px;height:3px;background:#0ea5ee;border-radius:0 1px 1px 0"></div>
<!-- ===== tutorial highlight + arrow ===== -->
<svg style="left:0;top:0" width="1224" height="674"><rect x="211.450" y="30.100" width="74.200" height="21.200" fill="none" stroke="#00fa80" stroke-width="4.700"/><polygon points="248,51.1 308.4,111.5 278.7,111.5 278.7,174.400 217.3,174.400 217.3,111.5 187.6,111.5" fill="#00fa80" stroke="#0b1b2b" stroke-width="3" stroke-miterlimit="10"/></svg>
</div>
</body>
</html>
